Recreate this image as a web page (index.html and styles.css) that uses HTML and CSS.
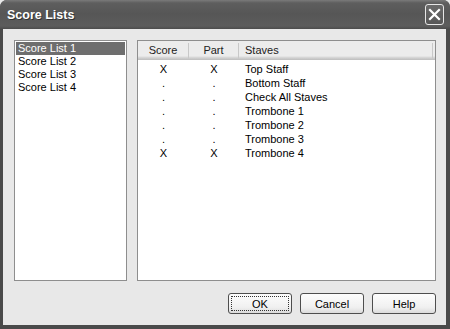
FILE: index.html
```html
<!DOCTYPE html>
<html lang="en">
<head>
    <meta charset="UTF-8">
    <title>Score Lists</title>
    <link rel="stylesheet" href="styles.css">
</head>
<body>
    <div class="window">
        <!-- title bar -->
        <div class="titlebar">
            <span class="title">Score Lists</span>
            <button class="close" aria-label="Close">
                <svg width="13" height="13" viewBox="0 0 13 13">
                    <path d="M2 2 L11 11 M11 2 L2 11" stroke="#fff" stroke-width="2.2" stroke-linecap="square"/>
                </svg>
            </button>
        </div>

        <div class="client">
            <div class="panes">
                <ul class="lists">
                    <li class="selected">Score List 1</li>
                    <li>Score List 2</li>
                    <li>Score List 3</li>
                    <li>Score List 4</li>
                </ul>

                <div class="staves">
                    <div class="head">
                        <span class="col score">Score</span>
                        <span class="col part">Part</span>
                        <span class="col name">Staves</span>
                        <span class="col rest"></span>
                    </div>
                    <div class="row"><span class="score">X</span><span class="part">X</span><span class="name">Top Staff</span></div>
                    <div class="row"><span class="score">.</span><span class="part">.</span><span class="name">Bottom Staff</span></div>
                    <div class="row"><span class="score">.</span><span class="part">.</span><span class="name">Check All Staves</span></div>
                    <div class="row"><span class="score">.</span><span class="part">.</span><span class="name">Trombone 1</span></div>
                    <div class="row"><span class="score">.</span><span class="part">.</span><span class="name">Trombone 2</span></div>
                    <div class="row"><span class="score">.</span><span class="part">.</span><span class="name">Trombone 3</span></div>
                    <div class="row"><span class="score">X</span><span class="part">X</span><span class="name">Trombone 4</span></div>
                </div>
            </div>

            <div class="buttons">
                <button class="btn default"><span>OK</span></button>
                <button class="btn"><span>Cancel</span></button>
                <button class="btn"><span>Help</span></button>
            </div>
        </div>
    </div>
</body>
</html>
```

FILE: styles.css
```css
body {
    margin: 0;
    background-color: #e8e8e8;
    font-family: 'Liberation Sans', Arial, sans-serif;
    font-size: 11px;
    color: #000;
}

.window {
    width: 450px;
    height: 329px;
    box-sizing: border-box;
    display: flex;
    flex-direction: column;
    background-color: #4a4a4a;
    border-radius: 7px 7px 0 0;
    overflow: hidden;
}

.titlebar {
    height: 29px;
    flex-shrink: 0;
    display: flex;
    align-items: center;
    justify-content: space-between;
    padding: 0 6px 0 7px;
    background: linear-gradient(#7a7a7a 0, #5e5e5e 3px, #565656 14px, #5c5c5c 26px, #4c4c4c 29px);
}

.title {
    color: #fff;
    font-size: 12.5px;
    font-weight: bold;
    text-shadow: 1px 1px 0 #333;
}

.close {
    width: 19px;
    height: 21px;
    padding: 0;
    display: flex;
    align-items: center;
    justify-content: center;
    background: linear-gradient(#6a6a6a, #575757);
    border: 1px solid #e6e6e6;
    border-radius: 3px;
}

.client {
    flex: 1;
    margin: 0 4px 4px 3px;
    background-color: #e8e8e8;
    padding: 11px 10px 11px 11px;
    display: flex;
    flex-direction: column;
}

.panes {
    display: flex;
    gap: 10px;
    height: 241px;
}

.lists {
    list-style: none;
    margin: 0;
    padding: 1px;
    width: 109px;
    background: #fff;
    border: 1px solid #8e8e8e;
}

.lists li {
    height: 13px;
    line-height: 13px;
    padding-left: 2px;
}

.lists li.selected {
    background-color: #6e6e6e;
    color: #fff;
}

.staves {
    flex: 1;
    background: #fff;
    border: 1px solid #8e8e8e;
}

.head {
    display: flex;
    height: 19px;
    background: linear-gradient(#ececec 0, #ececec 15px, #dcdcdc 16px, #d0d0d0 17px, #bdbdbd 19px);
    color: #222;
    margin-bottom: 2px;
}

.head .col {
    box-sizing: border-box;
    border-right: 1px solid #c8c8c8;
    height: 16px;
    margin-top: 2px;
    line-height: 14px;
}

.head .col.rest {
    border-right: none;
}

.head .col, .row span {
    display: block;
}

.score {
    width: 51px;
    text-align: center;
}

.part {
    width: 50px;
    text-align: center;
}

.head .name {
    width: 194px;
    padding-left: 6px;
}

.rest {
    flex: 1;
}

.row {
    display: flex;
    height: 14px;
    line-height: 14px;
}

.row .name {
    padding-left: 6px;
}

.buttons {
    display: flex;
    justify-content: flex-end;
    gap: 8px;
    margin-top: 12px;
}

.btn {
    width: 64px;
    height: 21px;
    padding: 2px;
    font-family: 'Liberation Sans', Arial, sans-serif;
    font-size: 11px;
    color: #000;
    background: linear-gradient(#fdfdfd, #f0f0f0 70%, #dcdcdc);
    border: 1px solid #4e4e4e;
    border-radius: 3px;
}

.btn span {
    display: flex;
    align-items: center;
    justify-content: center;
    height: 100%;
    box-sizing: border-box;
    border: 1px dotted transparent;
}

.btn.default span {
    border-color: #333;
}
```
